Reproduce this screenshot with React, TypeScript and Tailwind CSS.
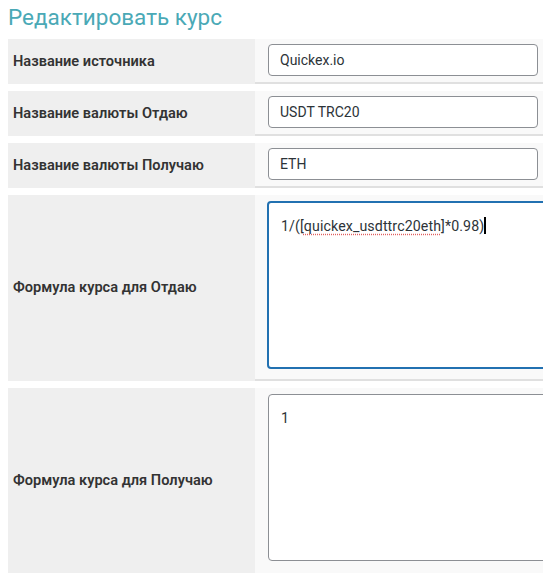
import React from "react";

const font = { fontFamily: "Roboto, 'Liberation Sans', sans-serif" };

function InputRow({ label, value }: { label: string; value: string }) {
  return (
    <div className="flex h-[45px]">
      <div className="w-[247px] shrink-0 bg-[#efefef] flex items-center pl-[5px] text-[14.6px] font-semibold text-[#333]">
        {label}
      </div>
      <div className="flex-1 bg-[#f9f9f9] border-b-2 border-[#e0e0e0] pl-[13px] pt-[5px]">
        <div className="w-[270px] h-[32px] bg-white border border-[#8c8f94] rounded-[4px] flex items-center px-[11px] text-[14px] text-[#2c3338]">
          {value}
        </div>
      </div>
    </div>
  );
}

export default function App() {
  return (
    <div className="w-[543px] h-[573px] overflow-hidden bg-white pl-[8px]" style={font}>
      <h1 className="text-[22.5px] leading-[24px] text-[#4aa9b6] pt-[5px] pb-[10px] font-normal">
        Редактировать курс
      </h1>
      <div className="flex flex-col gap-[7px] w-[600px]">
        <InputRow label="Название источника" value="Quickex.io" />
        <InputRow label="Название валюты Отдаю" value="USDT TRC20" />
        <InputRow label="Название валюты Получаю" value="ETH" />
        <div className="flex h-[186px]">
          <div className="w-[247px] shrink-0 bg-[#efefef] flex items-center pl-[5px] text-[14.6px] font-semibold text-[#333]">
            Формула курса для Отдаю
          </div>
          <div className="flex-1 bg-[#f9f9f9] border-b-2 border-[#e0e0e0] pl-[12px] pt-[6px]">
            <div className="w-[320px] h-[168px] bg-white border-2 border-[#2271b1] rounded-[4px] pl-[12px] pt-[13px] text-[14.2px] text-[#2c3338] leading-[20px] tracking-[0.1px]">
              1/([
              <span className="underline decoration-dotted decoration-[#e06060] underline-offset-[3px]">quickex_usdttrc20eth</span>
              ]*0.98)
              <span className="inline-block w-[2px] h-[17px] bg-black align-[-3px]" />
            </div>
          </div>
        </div>
        <div className="flex h-[186px]">
          <div className="w-[247px] shrink-0 bg-[#efefef] flex items-center pl-[5px] text-[14.6px] font-semibold text-[#333]">
            Формула курса для Получаю
          </div>
          <div className="flex-1 bg-[#f9f9f9] pl-[13px] pt-[6px]">
            <div className="w-[320px] h-[167px] bg-white border border-[#8c8f94] rounded-[4px] pl-[12px] pt-[13px] text-[14.2px] text-[#2c3338] leading-[20px]">
              1
            </div>
          </div>
        </div>
      </div>
    </div>
  );
}
